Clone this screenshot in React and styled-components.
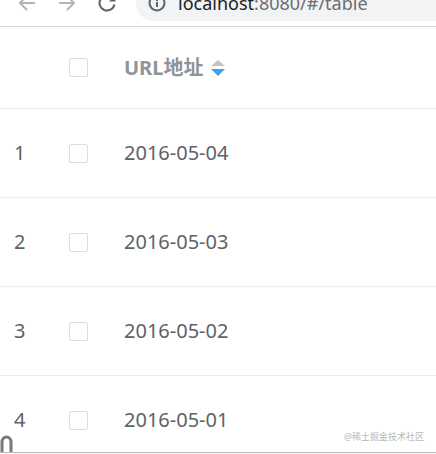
import React, { useState } from "react";
import styled, { createGlobalStyle } from "styled-components";

const rows = [
  { id: 1, url: "2016-05-04" },
  { id: 2, url: "2016-05-03" },
  { id: 3, url: "2016-05-02" },
  { id: 4, url: "2016-05-01" },
];

export default function App() {
  const [selected, setSelected] = useState([]);

  function toggleRow(id) {
    setSelected(
      selected.includes(id)
        ? selected.filter((item) => item !== id)
        : [...selected, id]
    );
  }

  function toggleAll() {
    setSelected(selected.length === rows.length ? [] : rows.map((r) => r.id));
  }

  return (
    <Window>
      <GlobalStyle />
      <Toolbar>
        <NavButton aria-label="Back">
          <svg width="18" height="18" viewBox="0 0 18 18" stroke="#b4b5b7">
            <path d="M17 9H2M9 2L2 9l7 7" />
          </svg>
        </NavButton>
        <NavButton aria-label="Forward">
          <svg width="18" height="18" viewBox="0 0 18 18" stroke="#b4b5b7">
            <path d="M1 9h15M9 2l7 7-7 7" />
          </svg>
        </NavButton>
        <NavButton aria-label="Reload">
          <svg width="18" height="18" viewBox="0 0 18 18" stroke="#5f6368">
            <path d="M16.400 10.500A7.500 7.500 0 1 1 14.300 3.700L16 5.500" />
            <path d="M17.500 1v6.500H11z" fill="#5f6368" stroke="none" />
          </svg>
        </NavButton>
        <AddressBar>
          <svg width="18" height="18" viewBox="0 0 18 18" stroke="#5f6368">
            <circle cx="9" cy="9" r="7.500" />
            <path d="M9 8v5M9 5v2" />
          </svg>
          <Address>
            <b>localhost</b>:8080/#/table
          </Address>
        </AddressBar>
      </Toolbar>
      <Content>
        <Table>
          <thead>
            <tr>
              <IndexHead />
              <CheckHead>
                <Checkbox
                  aria-label="Select all"
                  checked={selected.length === rows.length}
                  onChange={toggleAll}
                />
              </CheckHead>
              <Head>
                <SortButton>
                  URL地址
                  <svg width="14" height="16" viewBox="0 0 14 16">
                    <path d="M7 0l7 6H0z" fill="#c4c4c6" />
                    <path d="M0 9h14l-7 7z" fill="#409eee" />
                  </svg>
                </SortButton>
              </Head>
            </tr>
          </thead>
          <tbody>
            {rows.map((row) => (
              <tr key={row.id}>
                <IndexCell>{row.id}</IndexCell>
                <Cell>
                  <Checkbox
                    aria-label={`Select ${row.url}`}
                    checked={selected.includes(row.id)}
                    onChange={() => toggleRow(row.id)}
                  />
                </Cell>
                <Cell>{row.url}</Cell>
              </tr>
            ))}
          </tbody>
        </Table>
        <Watermark>@稀土掘金技术社区</Watermark>
        <Clip width="14" height="18" viewBox="0 0 14 18">
          <path d="M2 18V8a4.500 5 0 0 1 9 0v10" />
        </Clip>
      </Content>
      <BottomEdge />
    </Window>
  );
}

const GlobalStyle = createGlobalStyle`
  body {
    margin: 0;
    background-color: #fff;
    font-family: "Noto Sans", "Noto Sans CJK SC", sans-serif;
  }
`;

const Window = styled.div`
  height: 100vh;
  display: flex;
  flex-direction: column;
  overflow: hidden;
`;

const Toolbar = styled.header`
  height: 27px;
  flex-shrink: 0;
  padding: 0 0 5px 18px;

  display: flex;
  align-items: flex-end;
  gap: 22px;

  box-sizing: border-box;
  overflow: hidden;
  border-bottom: 1px solid #d6d7d9;

  svg {
    display: block;
    flex-shrink: 0;
    fill: none;
    stroke-width: 2;
  }
`;

const NavButton = styled.button`
  height: 36px;
  padding: 0;
  border: 0;
  background: none;
  cursor: pointer;
`;

const AddressBar = styled.div`
  flex: 1;
  height: 36px;
  margin-left: -2px;
  padding-left: 12px;

  display: flex;
  align-items: center;
  gap: 12px;

  border-radius: 18px 0 0 18px;
  background-color: #f1f3f4;
`;

const Address = styled.span`
  color: #6b6e72;
  font-size: 18px;
  line-height: 24px;
  white-space: nowrap;

  b {
    color: #202124;
    font-weight: 400;
  }
`;

const Content = styled.main`
  flex: 1;
  min-height: 0;
  position: relative;
  overflow: hidden;
`;

const Table = styled.table`
  width: 100%;
  table-layout: fixed;
  border-collapse: separate;
  border-spacing: 0;

  color: #606266;
  font-size: 20px;
  line-height: 28px;
`;

const Cell = styled.td`
  height: 89px;
  padding: 0 14px;
  box-sizing: border-box;
  border-bottom: 1px solid #ececee;
  white-space: nowrap;
`;

const IndexCell = styled(Cell)`
  padding-right: 0;
`;

const Head = styled.th`
  height: 82px;
  padding: 0 14px;
  box-sizing: border-box;
  border-bottom: 1px solid #ececee;
  text-align: left;
`;

const IndexHead = styled(Head)`
  width: 55px;
`;

const CheckHead = styled(Head)`
  width: 55px;
`;

const SortButton = styled.button`
  padding: 0;
  border: 0;
  background: none;

  display: flex;
  align-items: center;
  gap: 8px;

  color: #909399;
  font: inherit;
  font-weight: 700;
  cursor: pointer;
`;

const Checkbox = styled.input.attrs({ type: "checkbox" })`
  width: 19px;
  height: 19px;
  margin: 0;

  display: block;
  appearance: none;
  box-sizing: border-box;

  border: 1px solid #dcdddf;
  border-radius: 2px;
  background-color: #fff;
  cursor: pointer;

  &:checked {
    border-color: #409eff;
    background-color: #409eff;
  }
`;

const Watermark = styled.span`
  position: absolute;
  right: 12px;
  bottom: 8px;

  color: #b8b8b8;
  font-size: 9px;
  line-height: 14px;
`;

const Clip = styled.svg`
  position: absolute;
  left: 0;
  bottom: 0;

  fill: none;
  stroke: #77797c;
  stroke-width: 3;
`;

const BottomEdge = styled.footer`
  height: 2px;
  flex-shrink: 0;
  box-sizing: border-box;
  border-top: 1px solid #b9bbbe;
  background-color: #f4f4f4;
`;
